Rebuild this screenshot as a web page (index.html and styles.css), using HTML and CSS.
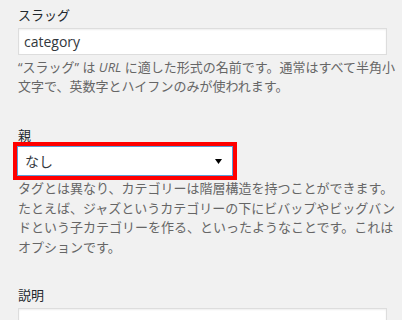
FILE: index.html
```html
<!DOCTYPE html>
<html lang="ja">
<head>
<meta charset="utf-8">
<link rel="stylesheet" href="styles.css">
</head>
<body>
<div class="wrap">
  <div class="field">
    <label class="label" for="slug">スラッグ</label>
    <input class="text-input" id="slug" type="text" value="category">
    <p class="description">“スラッグ” は <i>URL</i> に適した形式の名前です。通常はすべて半角小文字で、英数字とハイフンのみが使われます。</p>
  </div>
  <div class="field parent">
    <label class="label">親</label>
    <div class="select">
      <span class="select-value">なし</span>
      <svg class="arrow" width="7" height="5" viewBox="0 0 7 5"><path d="M0 0H7L3.5 5Z" fill="#000"/></svg>
    </div>
    <p class="description">タグとは異なり、カテゴリーは階層構造を持つことができます。たとえば、ジャズというカテゴリーの下にビバップやビッグバンドという子カテゴリーを作る、といったようなことです。これはオプションです。</p>
  </div>
  <div class="field">
    <label class="label" for="desc">説明</label>
    <textarea class="textarea" id="desc"></textarea>
  </div>
</div>
</body>
</html>
```

FILE: styles.css
```css
html, body {
  margin: 0;
  padding: 0;
  background: #f1f1f1;
  overflow: hidden;
}
body {
  font-family: "Open Sans", "Noto Sans CJK JP", sans-serif;
  color: #23282d;
  font-size: 13px;
}
.wrap {
  padding: 6px 0 0 18px;
  width: 388px;
}
.field {
  margin-bottom: 29px;
}
.label {
  display: block;
  font-size: 13px;
  line-height: 19.5px;
  margin-bottom: 2px;
  color: #23282d;
}
.parent .label {
  margin-bottom: 1px;
}
.text-input {
  display: block;
  box-sizing: border-box;
  width: 95%;
  height: 27px;
  margin: 0;
  padding: 0 5px;
  border: 1px solid #ddd;
  box-shadow: inset 0 1px 2px rgba(0,0,0,.07);
  background: #fff;
  font-family: "Open Sans", "Noto Sans CJK JP", sans-serif;
  font-size: 14px;
  color: #32373c;
  outline: none;
}
.description {
  margin: 3px 0 0;
  font-size: 13px;
  line-height: 19.5px;
  color: #666;
}
.description i {
  font-style: italic;
}
.select {
  box-sizing: border-box;
  width: 216px;
  height: 30px;
  margin-left: -1px;
  display: flex;
  align-items: center;
  justify-content: space-between;
  padding: 0 10px 0 7px;
  background: #fff;
  border: 1px solid #5b9dd9;
  box-shadow: 0 0 2px rgba(30,140,190,.8);
  outline: 4px solid #ff0000;
  font-size: 14px;
  color: #32373c;
}
.arrow {
  display: block;
}
.textarea {
  display: block;
  box-sizing: border-box;
  width: 95%;
  height: 60px;
  margin: 0;
  border: 1px solid #ddd;
  box-shadow: inset 0 1px 2px rgba(0,0,0,.07);
  background: #fff;
  resize: none;
}
```
